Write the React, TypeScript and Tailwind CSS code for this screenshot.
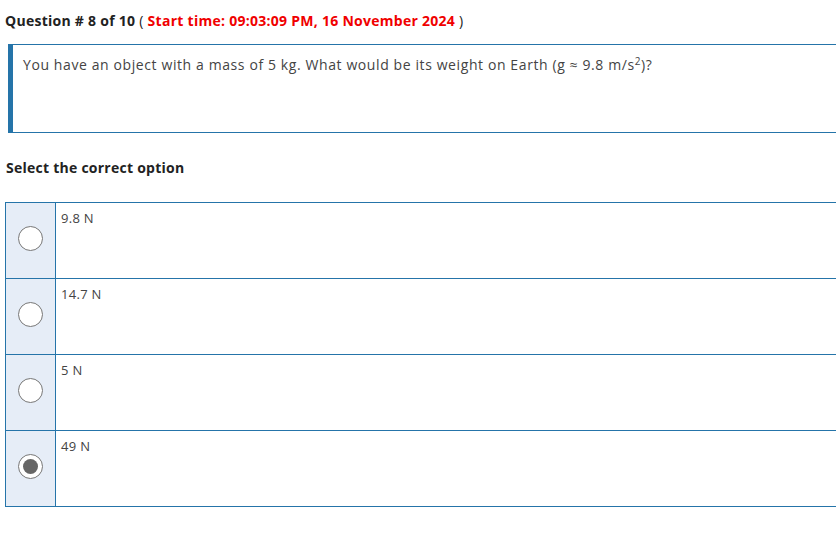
const options = ["9.8 N", "14.7 N", "5 N", "49 N"];
const selected = 3;

const App = () => {
  return (
    <div className="w-[836px] h-[536px] overflow-hidden bg-white font-['Open_Sans',sans-serif]">
      <div className="pt-[10px] pl-[5px] text-[14px] font-bold text-[#222] tracking-[0.27px]">
        Question # 8 of 10 <span className="font-normal">(</span>{" "}
        <span className="text-[#f00000]">Start time: 09:03:09 PM, 16 November 2024</span>{" "}
        <span className="font-normal">)</span>
      </div>

      <div className="ml-[8px] mt-[13px] h-[89px] border-y border-l-[5px] border-[#2574a9] pl-[10px] pt-[9px] text-[14px] text-[#444] tracking-[0.6px]">
        You have an object with a mass of 5 kg. What would be its weight on Earth (g ≈ 9.8 m/s
        <sup className="text-[10px]">2</sup>)?
      </div>

      <div className="pl-[6px] mt-[24px] text-[14px] font-bold text-[#222] tracking-[0.25px]">
        Select the correct option
      </div>

      <div className="ml-[5px] mt-[24px] border-t border-l border-[#2574a9]">
        {options.map((opt, i) => (
          <div key={i} className="flex h-[76px] border-b border-[#2574a9]">
            <div className="w-[50px] shrink-0 flex items-center justify-center pb-[4px] bg-[#e6edf7] border-r border-[#2574a9]">
              <span
                className={
                  i === selected
                    ? "w-[25px] h-[25px] rounded-full border-[1.5px] border-[#777] bg-white flex items-center justify-center"
                    : "w-[25px] h-[25px] rounded-full border-[1.5px] border-[#777] bg-white"
                }
              >
                {i === selected && <span className="w-[15px] h-[15px] rounded-full bg-[#666]" />}
              </span>
            </div>
            <div className="pl-[5px] pt-[6px] text-[13px] text-[#444] tracking-[0.3px]">{opt}</div>
          </div>
        ))}
      </div>
    </div>
  );
};

export default App;
